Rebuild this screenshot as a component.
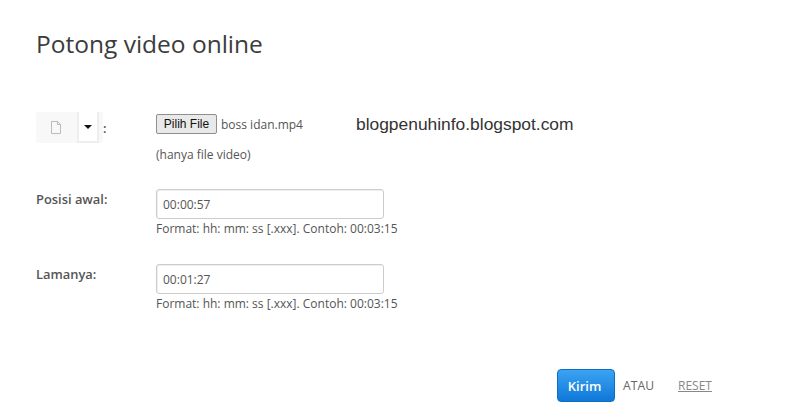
<style>
  :global(body) {
    margin: 0;
    background: #fff;
  }

  .page {
    width: 788px;
    height: 415px;
    overflow: hidden;
    box-sizing: border-box;
    padding: 28px 0 0 36px;
    font-family: "Open Sans", sans-serif;
    color: #444;
  }

  h1 {
    margin: 0;
    font-size: 24.5px;
    line-height: 32px;
    font-weight: 400;
    color: #3c3c3c;
  }

  .row {
    display: flex;
  }

  .label {
    width: 120px;
    flex: none;
    font-size: 12.9px;
    line-height: 16px;
    font-weight: 600;
    color: #555;
  }

  .file-row {
    margin-top: 52px;
  }

  .file-label {
    display: flex;
    align-items: center;
    gap: 0;
    height: 31px;
  }

  .toolbar {
    display: flex;
    width: 67px;
    height: 31px;
    background: #f8f8f8;
    border-radius: 3px;
  }

  .doc {
    width: 40px;
    display: flex;
    align-items: center;
    justify-content: center;
  }

  .split {
    width: 22px;
    box-sizing: border-box;
    margin-left: 1px;
    display: flex;
    align-items: center;
    justify-content: center;
    background: #fff;
    border-left: 2px solid #eee;
    border-right: 2px solid #eee;
    border-bottom: 2px solid #eee;
  }

  .caret {
    width: 0;
    height: 0;
    border-left: 4px solid transparent;
    border-right: 4px solid transparent;
    border-top: 4px solid #111;
  }

  .file-line {
    display: flex;
    align-items: center;
    height: 20px;
    margin-top: 2px;
    font-size: 12px;
    color: #555;
  }

  .file-btn {
    box-sizing: border-box;
    width: 61px;
    height: 20px;
    padding: 0;
    margin-right: 4px;
    background: #e9e9e9;
    border: 1px solid #8f8f8f;
    border-radius: 2px;
    font-family: "Liberation Sans", sans-serif;
    font-size: 12px;
    color: #111;
  }

  .brand {
    margin-left: 53px;
    font-family: "Liberation Sans", sans-serif;
    font-size: 17.4px;
    color: #333;
  }

  .note {
    margin: 14px 0 0;
    font-size: 12px;
    line-height: 14px;
    color: #555;
  }

  .time-row {
    margin-top: 27px;
  }

  .time-row + .time-row {
    margin-top: 28px;
  }

  .time-row .label {
    padding-top: 2px;
  }

  .field {
    box-sizing: border-box;
    display: block;
    width: 228px;
    height: 30px;
    padding: 0 6px;
    background: #fff;
    border: 1px solid #ccc;
    border-radius: 3px;
    box-shadow: inset 1px 1px 1px #eee;
    font-family: "Open Sans", sans-serif;
    font-size: 12px;
    color: #555;
  }

  .hint {
    margin: 3px 0 0;
    font-size: 12px;
    line-height: 14px;
    color: #555;
  }

  .actions {
    display: flex;
    align-items: center;
    margin: 58px 0 0 521px;
    height: 33px;
  }

  .submit {
    width: 58px;
    height: 33px;
    padding: 0 3px 0 0;
    border: 1px solid #0d6fc4;
    border-radius: 4px;
    background: linear-gradient(#3ba3f2, #0f78d8);
    color: #fff;
    font-family: "Open Sans", sans-serif;
    font-size: 13px;
    font-weight: 600;
  }

  .or {
    margin-left: 8px;
    font-size: 12.2px;
    font-weight: 400;
    color: #666;
  }

  .reset {
    margin-left: 24px;
    font-size: 12px;
    color: #888;
    text-decoration: underline;
  }
</style>

<div class="page">
  <h1>Potong video online</h1>

  <div class="row file-row">
    <div class="label file-label">
      <div class="toolbar">
        <div class="doc">
          <svg width="12" height="13" viewBox="0 0 12 13" fill="none" stroke="#bbb">
            <path d="M1.5 .5h6l3 3v9h-9z M7.5 .5v3h3" />
          </svg>
        </div>
        <div class="split"><span class="caret"></span></div>
      </div>
      <span>:</span>
    </div>
    <div>
      <div class="file-line">
        <button class="file-btn">Pilih File</button>
        <span>boss idan.mp4</span>
        <span class="brand">blogpenuhinfo.blogspot.com</span>
      </div>
      <p class="note">(hanya file video)</p>
    </div>
  </div>

  <div class="row time-row">
    <div class="label">Posisi awal:</div>
    <div>
      <input class="field" value="00:00:57" />
      <p class="hint">Format: hh: mm: ss [.xxx]. Contoh: 00:03:15</p>
    </div>
  </div>

  <div class="row time-row">
    <div class="label">Lamanya:</div>
    <div>
      <input class="field" value="00:01:27" />
      <p class="hint">Format: hh: mm: ss [.xxx]. Contoh: 00:03:15</p>
    </div>
  </div>

  <div class="actions">
    <button class="submit">Kirim</button>
    <span class="or">ATAU</span>
    <span class="reset">RESET</span>
  </div>
</div>
